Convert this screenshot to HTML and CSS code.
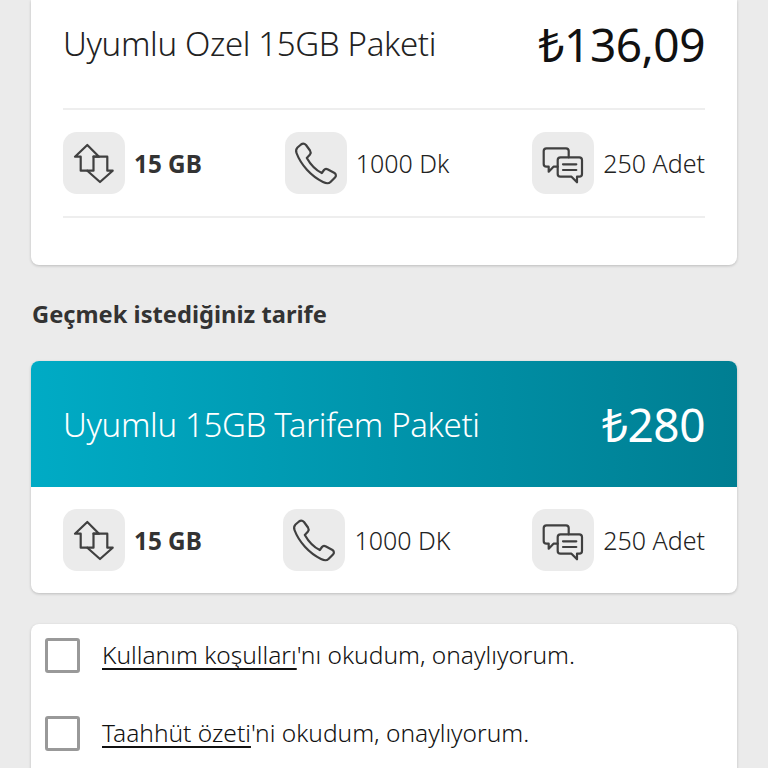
FILE: index.html
```html
<!DOCTYPE html>
<html lang="en">
<head>
  <meta charset="UTF-8">
  <title>Tarife değişikliği</title>
  <link rel="stylesheet" href="styles.css">
</head>
<body>
<svg class="defs" width="0" height="0">
  <symbol id="i-data" viewBox="0 0 62 62">
    <path d="M30.500 38.700 H17.700 V24.700 H12 L24.300 13 L36 24.700 H30.500 V38.700" />
    <path d="M30.500 24.700 H44.300 V38.700 H49.700 L37 50 L24.300 38.700" />
  </symbol>
  <symbol id="i-call" viewBox="0 0 62 62">
    <path d="M16 12.500 L12.500 15.500 C11 17 10.800 19 11.500 21 C16 33 26 44 38 50 C41 51.500 44 51.500 45.500 50 L50 45.500 C51.500 44 51 42 49.500 41 L43 37.500 C41.500 36.700 40 36.700 39 38 L36.800 41 C30.500 38 25.500 32.500 21.800 26 L25 22.500 C26 21 26 20 25 18.500 L21 13 C19.500 11.500 17.500 11.500 16 12.500 Z" />
  </symbol>
  <symbol id="i-sms" viewBox="0 0 62 62">
    <path d="M25.700 34.700 H21.500 L16.700 39.700 V34.700 H14.500 C12.700 34.700 11.700 33.700 11.700 32 V19 C11.700 17.300 12.700 16.300 14.500 16.300 H34 C35.700 16.300 36.700 17.300 36.700 19 V25.300" />
    <path d="M28.500 25.300 H47.300 C49 25.300 50 26.300 50 28 V42 C50 43.700 49 44.700 47.300 44.700 H45 V50.300 L39.500 44.700 H28.500 C26.700 44.700 25.700 43.700 25.700 42 V28 C25.700 26.300 26.700 25.300 28.500 25.300 Z" />
    <path d="M31 32.300 H44.300 M31 38 H44.300" />
  </symbol>
</svg>

<main class="page">
  <section class="card current">
    <div class="plan-head">
      <span class="plan-name">Uyumlu Ozel 15GB Paketi</span>
      <span class="plan-price">₺136,09</span>
    </div>
    <div class="allowances ruled">
      <div class="allowance">
        <span class="chip"><svg class="icon"><use href="#i-data"/></svg></span>
        <b>15 GB</b>
      </div>
      <div class="allowance">
        <span class="chip"><svg class="icon"><use href="#i-call"/></svg></span>
        <span>1000 Dk</span>
      </div>
      <div class="allowance">
        <span class="chip"><svg class="icon"><use href="#i-sms"/></svg></span>
        <span>250 Adet</span>
      </div>
    </div>
  </section>

  <h2 class="section-title">Geçmek istediğiniz tarife</h2>

  <section class="card next">
    <div class="plan-head teal">
      <span class="plan-name">Uyumlu 15GB Tarifem Paketi</span>
      <span class="plan-price">₺280</span>
    </div>
    <div class="allowances">
      <div class="allowance">
        <span class="chip"><svg class="icon"><use href="#i-data"/></svg></span>
        <b>15 GB</b>
      </div>
      <div class="allowance">
        <span class="chip"><svg class="icon"><use href="#i-call"/></svg></span>
        <span>1000 DK</span>
      </div>
      <div class="allowance">
        <span class="chip"><svg class="icon"><use href="#i-sms"/></svg></span>
        <span>250 Adet</span>
      </div>
    </div>
  </section>

  <section class="card terms">
    <label class="term"><span class="box"></span><span class="term-text"><a href="#">Kullanım koşulları</a>'nı okudum, onaylıyorum.</span></label>
    <label class="term"><span class="box"></span><span class="term-text"><a href="#">Taahhüt özeti</a>'ni okudum, onaylıyorum.</span></label>
  </section>
</main>
</body>
</html>
```

FILE: styles.css
```css
html, body { margin: 0; height: 768px; overflow: hidden; background: #ebebeb; }
body { font-family: "Noto Sans", sans-serif; color: #333; }
.defs { display: block; height: 0; }
.page { padding: 0 31px; height: 768px; overflow: hidden; }

.card { background: #fff; border-radius: 8px; box-shadow: 0 1px 3px #0003; overflow: hidden; }
.current { border-radius: 0 0 8px 8px; padding: 0 32px 47px; }

.plan-head { display: flex; justify-content: space-between; align-items: center; }
.plan-name { font-size: 33px; font-weight: 300; letter-spacing: -0.35px; color: #222; }
.plan-price { font-size: 46px; letter-spacing: -0.5px; color: #111; }
.current .plan-head { height: 87px; padding-bottom: 21px; border-bottom: 2px solid #eee; }

.allowances { display: flex; justify-content: space-between; align-items: center; font-size: 25px; font-weight: 300; color: #222; }
.allowances b { font-size: 24.300px; font-weight: 700; color: #333; }
.allowances.ruled { height: 106px; border-bottom: 2px solid #eee; }
.allowance { display: flex; align-items: center; gap: 9px; }
.chip { width: 62px; height: 62px; border-radius: 14px; background: #ebebeb; display: flex; }
.icon { width: 62px; height: 62px; fill: none; stroke: #404040; stroke-width: 2.200; stroke-linejoin: round; stroke-linecap: round; }

.section-title { margin: 35px 0 33px 1px; font-size: 23.700px; line-height: 28px; font-weight: 700; color: #333; }

.teal { height: 126px; padding: 0 32px; background: linear-gradient(90deg, #00abc5, #007e92); }
.teal .plan-name, .teal .plan-price { color: #fff; }
.next .allowances { height: 106px; padding: 0 32px; }

.terms { margin-top: 31px; height: 200px; padding: 0 14px; }
.term { display: flex; align-items: center; gap: 22px; height: 62px; margin-bottom: 16px; font-size: 24.500px; font-weight: 300; color: #111; }
.term-text { line-height: 30px; }
.term a { color: #111; text-decoration: underline 2px; text-underline-offset: 4px; text-decoration-skip-ink: none; }
.box { width: 29px; height: 29px; border: 3px solid #999; border-radius: 3px; }
```
